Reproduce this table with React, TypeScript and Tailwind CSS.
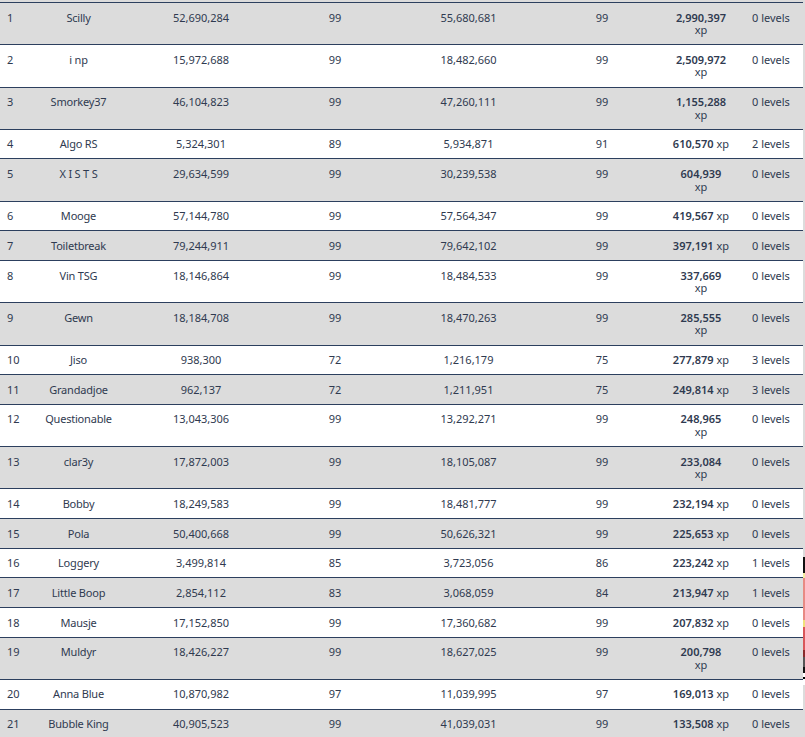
import React from "react";

type Row = [string, string, string, string, string, string, string, boolean, string];

const rows: Row[] = [
  ["1", "Scilly", "52,690,284", "99", "55,680,681", "99", "2,990,397", true, "0 levels"],
  ["2", "i np", "15,972,688", "99", "18,482,660", "99", "2,509,972", true, "0 levels"],
  ["3", "Smorkey37", "46,104,823", "99", "47,260,111", "99", "1,155,288", true, "0 levels"],
  ["4", "Algo RS", "5,324,301", "89", "5,934,871", "91", "610,570", false, "2 levels"],
  ["5", "X I S T S", "29,634,599", "99", "30,239,538", "99", "604,939", true, "0 levels"],
  ["6", "Mooge", "57,144,780", "99", "57,564,347", "99", "419,567", false, "0 levels"],
  ["7", "Toiletbreak", "79,244,911", "99", "79,642,102", "99", "397,191", false, "0 levels"],
  ["8", "Vin TSG", "18,146,864", "99", "18,484,533", "99", "337,669", true, "0 levels"],
  ["9", "Gewn", "18,184,708", "99", "18,470,263", "99", "285,555", true, "0 levels"],
  ["10", "Jiso", "938,300", "72", "1,216,179", "75", "277,879", false, "3 levels"],
  ["11", "Grandadjoe", "962,137", "72", "1,211,951", "75", "249,814", false, "3 levels"],
  ["12", "Questionable", "13,043,306", "99", "13,292,271", "99", "248,965", true, "0 levels"],
  ["13", "clar3y", "17,872,003", "99", "18,105,087", "99", "233,084", true, "0 levels"],
  ["14", "Bobby", "18,249,583", "99", "18,481,777", "99", "232,194", false, "0 levels"],
  ["15", "Pola", "50,400,668", "99", "50,626,321", "99", "225,653", false, "0 levels"],
  ["16", "Loggery", "3,499,814", "85", "3,723,056", "86", "223,242", false, "1 levels"],
  ["17", "Little Boop", "2,854,112", "83", "3,068,059", "84", "213,947", false, "1 levels"],
  ["18", "Mausje", "17,152,850", "99", "17,360,682", "99", "207,832", false, "0 levels"],
  ["19", "Muldyr", "18,426,227", "99", "18,627,025", "99", "200,798", true, "0 levels"],
  ["20", "Anna Blue", "10,870,982", "97", "11,039,995", "97", "169,013", false, "0 levels"],
  ["21", "Bubble King", "40,905,523", "99", "41,039,031", "99", "133,508", false, "0 levels"],
];

const cell = "pt-[8.5px] pb-[7.5px] leading-[12.64px]";

export default function App() {
  return (
    <div
      className="flex w-[805px] h-[737px] overflow-hidden bg-[#dcdcdc] text-[11px] text-[#2f3a50]"
      style={{ fontFamily: '"Noto Sans", "Open Sans", sans-serif' }}
    >
      <div className="w-[803px] shrink-0 pt-[2px]">
        <div className="border-t border-[#2c3f5e]">
          {rows.map((r, i) => (
            <div
              key={r[0]}
              className={`grid grid-cols-[40px_77px_168px_100px_167px_100px_98px_1fr] border-b border-[#2c3f5e] ${
                i % 2 === 0 ? "bg-[#dcdcdc]" : "bg-white"
              }`}
            >
              <div className={`${cell} pl-[7px]`}>{r[0]}</div>
              <div className={`${cell} text-center whitespace-nowrap tracking-[-0.2px]`}>{r[1]}</div>
              <div className={`${cell} text-center`}>{r[2]}</div>
              <div className={`${cell} text-center`}>{r[3]}</div>
              <div className={`${cell} text-center`}>{r[4]}</div>
              <div className={`${cell} text-center`}>{r[5]}</div>
              {r[7] ? (
                <div className={`${cell} text-center whitespace-nowrap`}>
                  <div className="font-semibold">{r[6]}</div>
                  <div>xp</div>
                </div>
              ) : (
                <div className={`${cell} text-center whitespace-nowrap`}>
                  <span className="font-semibold">{r[6]}</span> <span>xp</span>
                </div>
              )}
              <div className={`${cell} pl-[2px] whitespace-nowrap`}>{r[8]}</div>
            </div>
          ))}
        </div>
      </div>
      <div className="flex-1 flex flex-col">
        <div className="h-[557px]" />
        <div className="h-[16px] bg-[#111111]" />
        <div className="h-[5px] bg-[#f3eea0]" />
        <div className="h-[42px] bg-[#e88a84]" />
        <div className="h-[7px] bg-[#f0e07a]" />
        <div className="h-[23px] bg-[#d9575a]" />
        <div className="h-[7px] bg-[#8a2b2b]" />
        <div className="h-[10px] bg-[#555555]" />
        <div className="h-[6px] bg-[#111111]" />
        <div className="h-[4px] bg-white" />
        <div className="h-[2px] bg-black" />
        <div className="h-[6px] bg-white" />
      </div>
    </div>
  );
}
